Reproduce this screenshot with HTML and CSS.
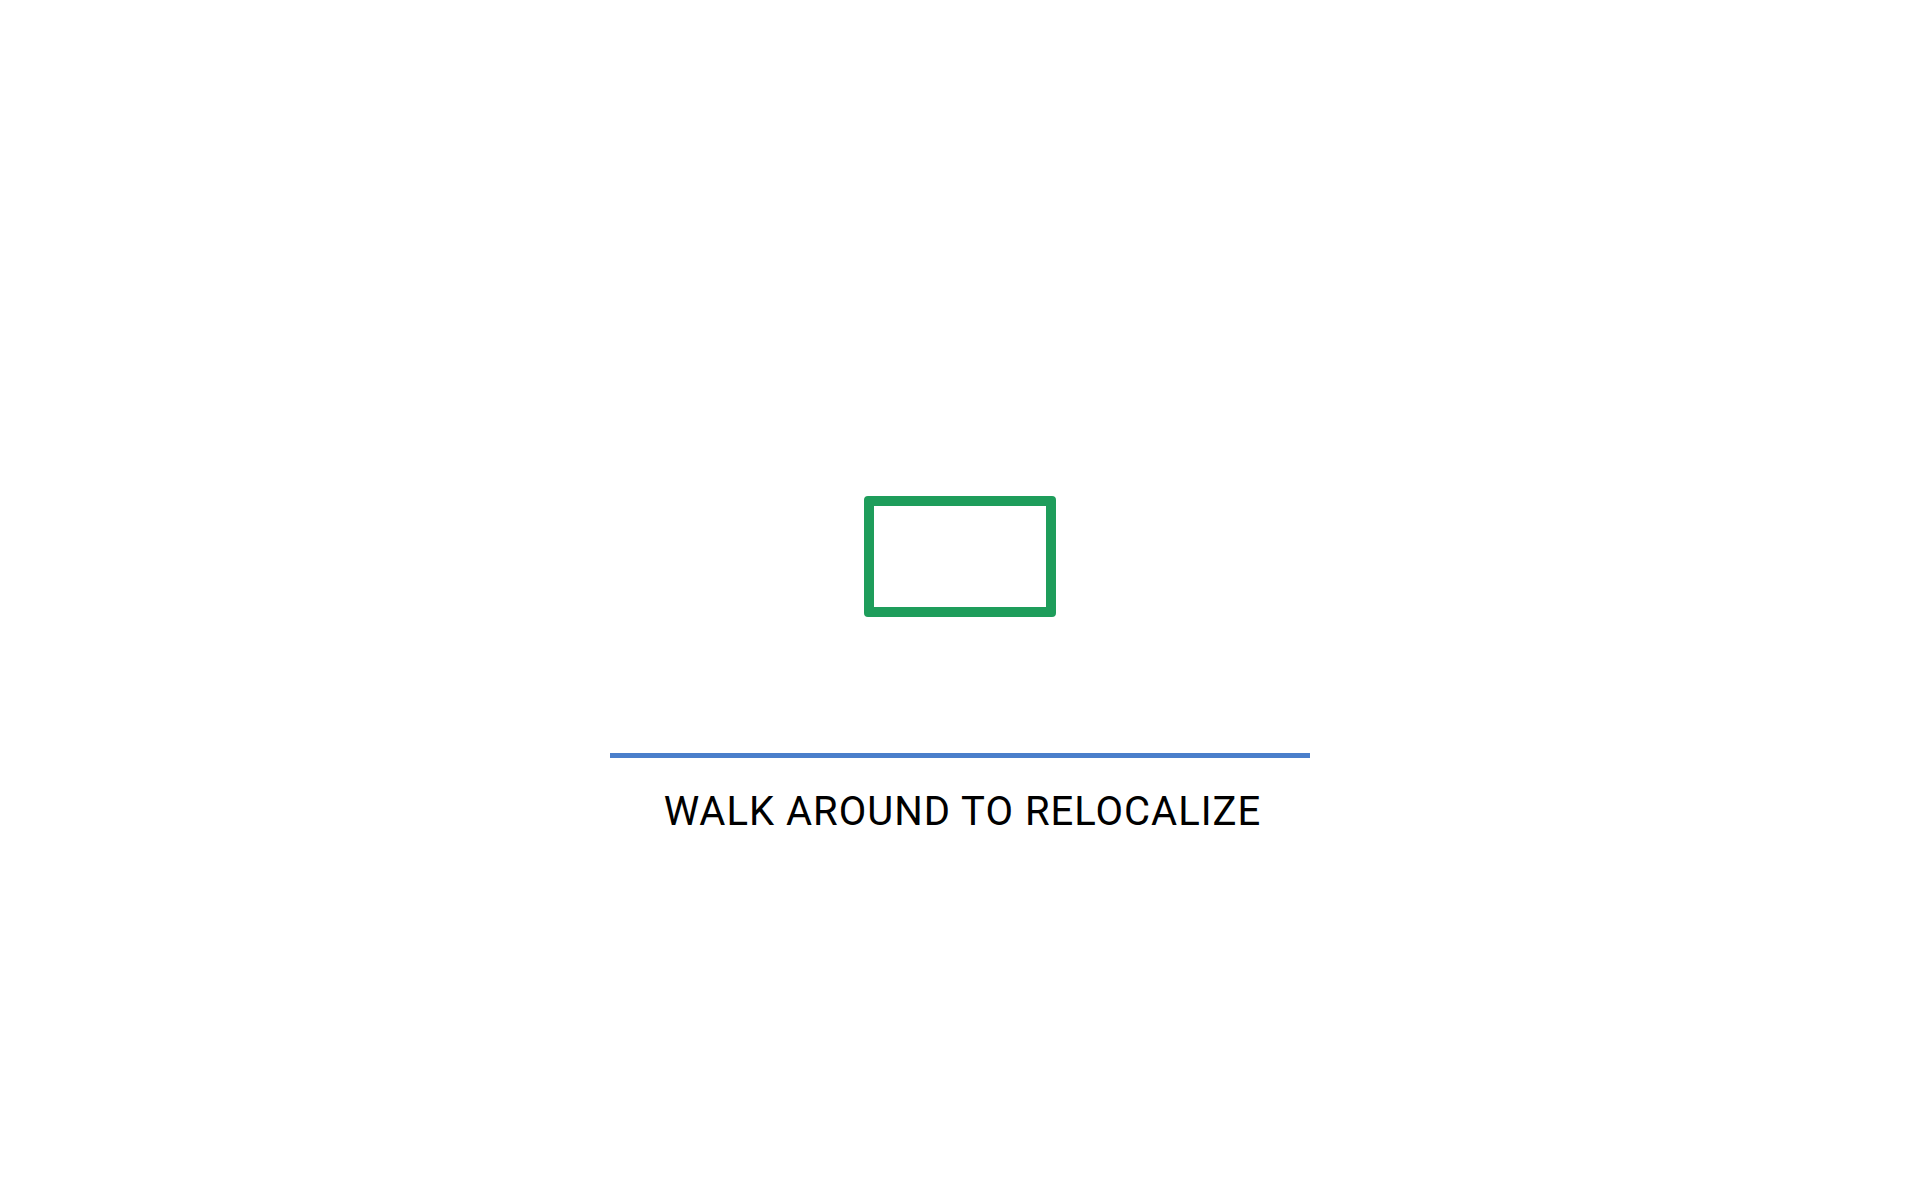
FILE: index.html
```html
<!DOCTYPE html>
<html>
<head>
<meta charset="utf-8">
<link rel="stylesheet" href="styles.css">
</head>
<body>
<main class="screen">
  <div class="frame"></div>
  <div class="progress"></div>
  <p class="message">WALK AROUND TO RELOCALIZE</p>
</main>
</body>
</html>
```
FILE: styles.css
```css
html, body {
  margin: 0;
  padding: 0;
  background: #ffffff;
}
.screen {
  width: 1920px;
  height: 1200px;
  display: flex;
  flex-direction: column;
  align-items: center;
  padding-top: 496px;
  box-sizing: border-box;
}
.frame {
  width: 192px;
  height: 121px;
  box-sizing: border-box;
  border: 10px solid #1e9d5b;
  border-radius: 4px;
}
.progress {
  margin-top: 136px;
  width: 700px;
  height: 5px;
  background: #4a7fcb;
}
.message {
  margin: 30px 0 0;
  padding-left: 5px;
  font-family: Roboto, "Noto Sans", sans-serif;
  font-size: 40px;
  line-height: 48px;
  color: #000000;
  letter-spacing: 1px;
}
```
